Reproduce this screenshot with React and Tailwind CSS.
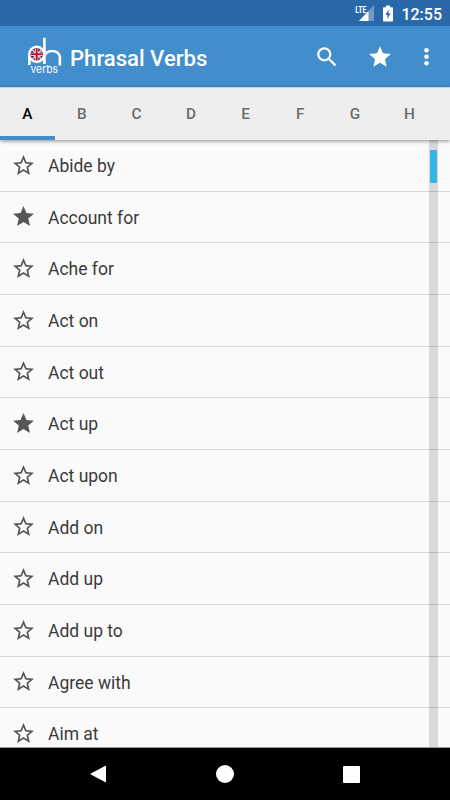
import React, { useState } from "react";

const STAR = "M12 17.27L18.18 21l-1.64-7.03L22 9.24l-7.19-.61L12 2 9.19 8.63 2 9.24l5.46 4.73L5.82 21z";
const STAR_BORDER = "M22 9.24l-7.19-.62L12 2 9.19 8.63 2 9.24l5.46 4.73L5.82 21 12 17.27 18.18 21l-1.63-7.03L22 9.24zM12 15.4l-3.76 2.27 1-4.28-3.32-2.88 4.38-.38L12 6.1l1.71 4.04 4.38.38-3.32 2.88 1 4.28L12 15.4z";

const letters = ["A", "B", "C", "D", "E", "F", "G", "H"];

const initialVerbs = [
  { name: "Abide by", starred: false },
  { name: "Account for", starred: true },
  { name: "Ache for", starred: false },
  { name: "Act on", starred: false },
  { name: "Act out", starred: false },
  { name: "Act up", starred: true },
  { name: "Act upon", starred: false },
  { name: "Add on", starred: false },
  { name: "Add up", starred: false },
  { name: "Add up to", starred: false },
  { name: "Agree with", starred: false },
  { name: "Aim at", starred: false },
];

const StatusBar = () => (
  <div className="flex h-[26px] shrink-0 items-center justify-end bg-[#2a69a9] pr-[8px] text-white">
    <svg className="mr-[9px] h-[18px] w-[20px]" viewBox="0 0 20 18">
      <path d="M20 1v16H5z" fill="#7399c4" />
      <path d="M14.500 7v10H5z" fill="#fff" />
      <path d="M0 0h13v9H0z" fill="#2a69a9" />
      <text x="1.300" y="8.500" fill="#fff" fontFamily="Roboto" fontWeight="700" fontSize="9.800" textLength="11" lengthAdjust="spacingAndGlyphs">LTE</text>
    </svg>
    <svg className="mr-[8px] h-[17px] w-[10px]" viewBox="0 0 10 17">
      <path d="M3 .5h4v1.700h2.200q.8 0 .8.800v12.700q0 .8-.8.800H.8q-.8 0-.8-.8V3q0-.8.8-.8H3z" fill="#fff" />
      <path d="M5.500 4.500L2.500 10h2v4l3-5.500h-2z" fill="#2a69a9" />
    </svg>
    <span className="pt-[3px] text-[16px] leading-none font-medium">12:55</span>
  </div>
);

const Logo = () => (
  <svg className="h-[40px] w-[36px]" viewBox="0 0 36 40">
    <defs>
      <clipPath id="flag"><circle cx="9.700" cy="17.300" r="6.200" /></clipPath>
    </defs>
    <g fill="none" stroke="#fff" strokeWidth="2.600">
      <path d="M2.300 17v11" />
      <path d="M17.400 .7V27M17.400 19.500a8 7.300 0 0 1 15.500 0V28.500" />
    </g>
    <circle cx="9.700" cy="17.300" r="8.700" fill="#fff" />
    <g clipPath="url(#flag)">
      <rect x="3" y="10" width="14" height="15" fill="#25306f" />
      <path d="M4 11.500l12 12M16 11.500l-12 12" stroke="#fff" strokeWidth="1.600" />
      <path d="M4 11.500l12 12M16 11.500l-12 12" stroke="#d22c42" strokeWidth=".6" />
      <path d="M9.700 11v13M3.500 17.300h13" stroke="#fff" strokeWidth="3.200" />
      <path d="M9.700 11v13M3.500 17.300h13" stroke="#c8102e" strokeWidth="2" />
    </g>
    <text x="3.500" y="36" fill="#fff" fontFamily="Inter" fontSize="11" textLength="27.500" lengthAdjust="spacingAndGlyphs">verbs</text>
  </svg>
);

const AppBar = () => (
  <div className="flex h-[61px] shrink-0 items-center bg-[#428dcc] pl-[27px] text-white">
    <Logo />
    <h1 className="ml-[7px] flex-1 pt-[3px] text-[22.100px] leading-none font-medium">Phrasal Verbs</h1>
    <button className="mr-[27px]">
      <svg className="size-[26px]" viewBox="0 0 24 24" fill="currentColor">
        <path d="M15.500 14h-.79l-.28-.27C15.410 12.590 16 11.110 16 9.500 16 5.910 13.090 3 9.500 3S3 5.910 3 9.500 5.910 16 9.500 16c1.610 0 3.090-.59 4.230-1.570l.27.28v.79l5 4.990L20.490 19l-4.990-5zm-6 0C7.010 14 5 11.990 5 9.500S7.010 5 9.500 5 14 7.010 14 9.500 11.990 14 9.500 14z" />
      </svg>
    </button>
    <button className="mr-[20px]">
      <svg className="size-[26px]" viewBox="0 0 24 24" fill="currentColor"><path d={STAR} /></svg>
    </button>
    <button className="mr-[10px]">
      <svg className="size-[27px]" viewBox="0 0 24 24" fill="currentColor">
        <circle cx="12" cy="6.500" r="2" />
        <circle cx="12" cy="12.300" r="2" />
        <circle cx="12" cy="18.100" r="2" />
      </svg>
    </button>
  </div>
);

const Tabs = ({ selected, onSelect }) => (
  <div className="z-10 flex h-[53px] shrink-0 overflow-hidden border-t border-[#c5d9ea] bg-[#eeeeee] shadow-[0_1px_4px_rgba(0,0,0,0.45)]">
    {letters.map((letter) => (
      <button
        key={letter}
        onClick={() => onSelect(letter)}
        className={`w-[54.600px] shrink-0 border-b-4 pt-[5px] text-[15.300px] font-medium ${selected === letter ? "border-[#428dcc] text-black" : "border-transparent text-[#6b6b6b]"}`}
      >
        {letter}
      </button>
    ))}
  </div>
);

const VerbRow = ({ verb, onToggle }) => (
  <li className="flex h-[51.670px] shrink-0 items-center border-b border-[#d8d8d8] pl-[11.400px]">
    <button onClick={onToggle} className="text-[#555658]">
      <svg className="size-[25px]" viewBox="0 0 24 24" fill="currentColor">
        <path d={verb.starred ? STAR : STAR_BORDER} />
      </svg>
    </button>
    <span className="ml-[11.600px] pt-[3px] text-[17.500px] leading-none text-[#3a3a3a]">{verb.name}</span>
  </li>
);

const NavBar = () => (
  <div className="flex h-[53px] shrink-0 items-center justify-center gap-[109px] border-t border-[#8f9a96] bg-black">
    <svg className="h-[18px] w-[17px]" viewBox="0 0 17 18" fill="#fff"><path d="M16 .5v17L.8 9.600q-.8-.6 0-1.200z" /></svg>
    <div className="size-[18px] rounded-full bg-white" />
    <div className="size-[17px] rounded-[1px] bg-white" />
  </div>
);

export default function App() {
  const [selected, setSelected] = useState("A");
  const [verbs, setVerbs] = useState(initialVerbs);

  const toggle = (name) => {
    setVerbs(verbs.map((v) => (v.name === name ? { ...v, starred: !v.starred } : v)));
  };

  return (
    <div className="flex h-[800px] w-[450px] flex-col overflow-hidden bg-[#fafafa] font-[Roboto,sans-serif]">
      <StatusBar />
      <AppBar />
      <Tabs selected={selected} onSelect={setSelected} />
      <div className="relative min-h-0 flex-1 overflow-hidden">
        <ul className="flex flex-col">
          {verbs.map((verb) => (
            <VerbRow key={verb.name} verb={verb} onToggle={() => toggle(verb.name)} />
          ))}
        </ul>
        <div className="absolute top-0 right-[12px] h-full w-[9px] bg-black/13 px-px pt-[10px]">
          <div className="h-[33px] rounded-[1px] bg-[#33b5e5]" />
        </div>
      </div>
      <NavBar />
    </div>
  );
}
